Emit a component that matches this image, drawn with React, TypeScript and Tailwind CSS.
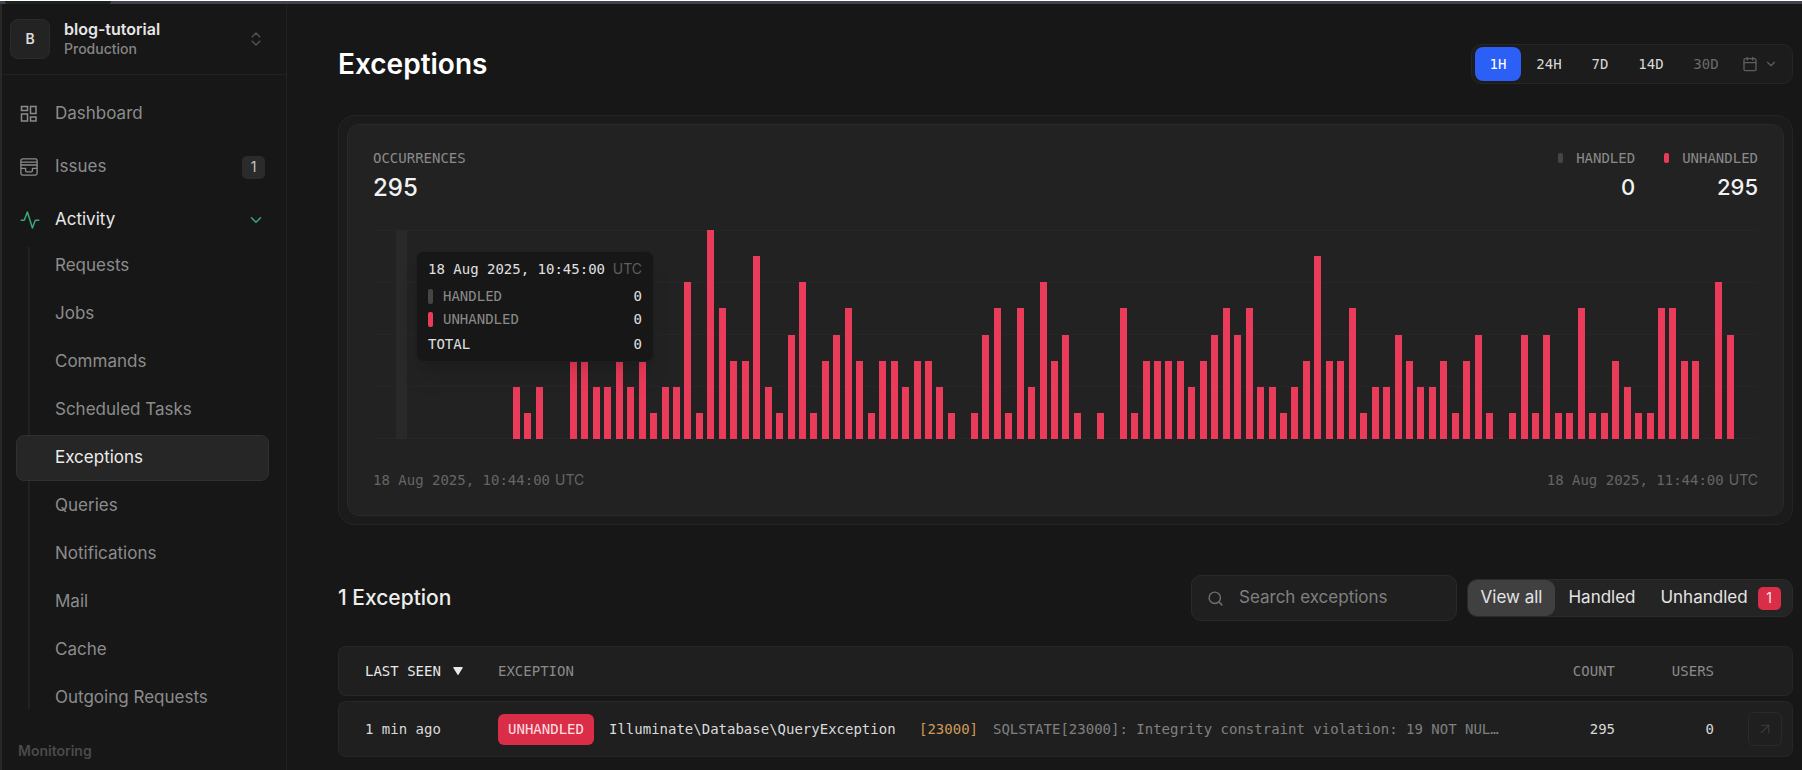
import { useState } from "react";
import {
  ArrowUpRight,
  Calendar,
  ChevronDown,
  ChevronsUpDown,
  Search,
} from "lucide-react";
import clsx from "clsx";

const activityLinks = [
  "Requests",
  "Jobs",
  "Commands",
  "Scheduled Tasks",
  "Exceptions",
  "Queries",
  "Notifications",
  "Mail",
  "Cache",
  "Outgoing Requests",
];

const ranges = [
  { label: "1H", width: "w-[46px]" },
  { label: "24H", width: "w-[54px]" },
  { label: "7D", width: "w-[46px]" },
  { label: "14D", width: "w-[54px]" },
  { label: "30D", width: "w-[54px]", disabled: true },
];

// one value per 30 second bucket
const buckets = [
  0, 0, 0, 0, 0, 0, 0, 0, 0, 0, 0, 0, 2, 1, 2, 0, 0, 3, 3, 2, 2, 3, 2, 3, 1, 2,
  2, 6, 1, 8, 5, 3, 3, 7, 2, 1, 4, 6, 1, 3, 4, 5, 3, 1, 3, 3, 2, 3, 3, 2, 1, 0,
  1, 4, 5, 1, 5, 2, 6, 3, 4, 1, 0, 1, 0, 5, 1, 3, 3, 3, 3, 2, 3, 4, 5, 4, 5, 2,
  2, 1, 2, 3, 7, 3, 3, 5, 1, 2, 2, 4, 3, 2, 2, 3, 1, 3, 4, 1, 0, 1, 4, 1, 4, 1,
  1, 5, 1, 1, 3, 2, 1, 1, 5, 5, 3, 3, 0, 6, 4, 0, 0,
];
const maxCount = 8;
const hoveredBucket = 2;

const mono = "font-['DejaVu_Sans_Mono',monospace]";

const DashboardIcon = () => (
  <svg
    width="18"
    height="18"
    viewBox="0 0 18 18"
    fill="none"
    stroke="currentColor"
    strokeWidth="1.5"
  >
    <rect x="1.5" y="1.5" width="6" height="4" />
    <rect x="10.5" y="1.5" width="5.5" height="7" />
    <rect x="1.5" y="9" width="6" height="7" />
    <rect x="10.5" y="12" width="5.5" height="4" />
  </svg>
);

const IssuesIcon = () => (
  <svg
    width="18"
    height="18"
    viewBox="0 0 18 18"
    fill="none"
    stroke="currentColor"
    strokeWidth="1.3"
    strokeLinejoin="round"
  >
    <rect x="0.9" y="0.9" width="16.2" height="16.2" rx="1.8" />
    <path d="M1 4.2h16M1 7h16M1 10.4h4.6v2.4a1 1 0 0 0 1 1h4.8a1 1 0 0 0 1-1v-2.4H17" />
  </svg>
);

const ActivityIcon = () => (
  <svg
    width="20"
    height="18"
    viewBox="0 0 20 18"
    fill="none"
    stroke="currentColor"
    strokeWidth="1.5"
    strokeLinecap="round"
    strokeLinejoin="round"
  >
    <path d="M1.2 9.3h3L7.4 1l5 16 2.9-7.7h3.5" />
  </svg>
);

const Sidebar = () => {
  return (
    <aside className="w-[285px] shrink-0 border-r border-[#212121] flex flex-col">
      <button
        type="button"
        className="h-[71px] pl-2 pr-[21px] flex items-center text-left border-b border-[#222222]"
      >
        <span className="size-10 rounded-lg border border-[#2b2b2b] bg-[#232323] flex items-center justify-center text-sm font-semibold text-[#dcdcdc]">
          B
        </span>
        <span className="ml-3.5 flex-1 flex flex-col">
          <span className="text-base leading-5 font-semibold text-[#e6e6e6]">
            blog-tutorial
          </span>
          <span className="text-sm leading-5 font-medium text-[#858585]">
            Production
          </span>
        </span>
        <ChevronsUpDown className="size-[18px] text-[#505050]" strokeWidth={2} />
      </button>

      <nav className="pl-[18px] pr-[21px] pt-4 text-[17px] text-[#8c8c8c]">
        <a href="#dashboard" className="h-[46px] flex items-center">
          <span className="w-[35px]">
            <DashboardIcon />
          </span>
          Dashboard
        </a>
        <a href="#issues" className="mt-[7px] h-[46px] flex items-center">
          <span className="w-[35px]">
            <IssuesIcon />
          </span>
          Issues
          <span className="ml-auto size-[23px] rounded-[5px] bg-[#2b2b2b] flex items-center justify-center text-sm text-[#c4c4c4]">
            1
          </span>
        </a>
        <a
          href="#activity"
          className="mt-[7px] h-[46px] flex items-center text-[#e8e8e8]"
        >
          <span className="w-[35px] text-[#3aa873]">
            <ActivityIcon />
          </span>
          Activity
          <ChevronDown className="ml-auto size-[18px] text-[#3aa873]" />
        </a>
        <ul className="relative flex flex-col gap-0.5">
          <span className="absolute left-2 top-1 bottom-3 w-0.5 bg-[#222222]" />
          {activityLinks.map((link) => (
            <li key={link} className="relative -ml-1 -mr-1">
              <a
                href={"#" + link.toLowerCase().replace(" ", "-")}
                className={clsx(
                  "h-[46px] flex items-center",
                  link === "Exceptions"
                    ? "pl-[38px] rounded-lg border border-[#303030] bg-[#262626] text-[#ececec]"
                    : "pl-[39px]",
                )}
              >
                {link}
              </a>
            </li>
          ))}
        </ul>
      </nav>
      <h2 className="mt-[18px] ml-4 text-sm leading-6 font-semibold text-[#4a4a4a]">
        Monitoring
      </h2>
    </aside>
  );
};

type StatProps = {
  label: string;
  value: number;
  markerClass: string;
};

const Stat = ({ label, value, markerClass }: StatProps) => (
  <div className="flex flex-col items-end">
    <div className="flex items-center gap-[13px] leading-5">
      <span className={clsx("w-[5px] h-2.5 rounded-xs", markerClass)} />
      <span className={clsx(mono, "text-sm leading-5 text-[#8a8a8a]")}>
        {label}
      </span>
    </div>
    <span className="mt-[3px] text-[22px] leading-8 font-medium text-[#f2f2f2]">
      {value}
    </span>
  </div>
);

const Tooltip = () => (
  <div
    className={clsx(
      mono,
      "absolute left-[43px] top-[21px] w-[238px] h-[111px] rounded-lg border border-[#1f1f1f] bg-[#171717] shadow-xl px-[11px] pt-[7px] text-sm leading-5",
    )}
  >
    <div className="flex justify-between text-[#e0e0e0]">
      <span>18 Aug 2025, 10:45:00</span>
      <span className="text-[#5e5e5e] font-['Inter',sans-serif]">UTC</span>
    </div>
    <div className="mt-[7px] flex items-center text-[#8a8a8a]">
      <span className="w-[5px] h-[15px] mr-2.5 rounded-xs bg-[#454545]" />
      HANDLED
      <span className="ml-auto text-[#e0e0e0]">0</span>
    </div>
    <div className="mt-[3px] flex items-center text-[#8a8a8a]">
      <span className="w-[5px] h-[15px] mr-2.5 rounded-xs bg-[#eb3b5a]" />
      UNHANDLED
      <span className="ml-auto text-[#e0e0e0]">0</span>
    </div>
    <div className="mt-[5px] flex justify-between text-[#e0e0e0]">
      <span>TOTAL</span>
      <span>0</span>
    </div>
  </div>
);

const Chart = () => (
  <div className="relative mt-[26px] h-[209px]">
    <div className="absolute inset-0 flex flex-col justify-between">
      {[0, 1, 2, 3, 4].map((line) => (
        <div key={line} className="h-px bg-[#262626]" />
      ))}
    </div>
    <div className="relative h-full flex items-end">
      {buckets.map((count, i) => (
        <div key={i} className="flex-1 h-full flex items-end justify-center">
          {i === hoveredBucket ? (
            <div className="w-full h-full bg-[#292929]" />
          ) : (
            <div
              className="w-[7px] bg-[#eb3b5a]"
              style={{ height: (count / maxCount) * 100 + "%" }}
            />
          )}
        </div>
      ))}
    </div>
    <Tooltip />
  </div>
);

const Occurrences = () => (
  <section className="mt-[31px] rounded-2xl border border-[#242424] bg-[#1b1b1b] p-2">
    <div className="rounded-xl border border-[#292929] bg-[#222222] px-[25px] pt-[23px] pb-[25px]">
      <div className="flex justify-between">
        <div className="flex flex-col">
          <span className={clsx(mono, "text-sm leading-5 text-[#8a8a8a]")}>
            OCCURRENCES
          </span>
          <span className="mt-1 text-2xl leading-8 font-medium text-[#f2f2f2]">
            295
          </span>
        </div>
        <div className="flex gap-[29px]">
          <Stat label="HANDLED" value={0} markerClass="bg-[#454545]" />
          <Stat label="UNHANDLED" value={295} markerClass="bg-[#eb3b5a]" />
        </div>
      </div>
      <Chart />
      <div
        className={clsx(
          mono,
          "mt-[31px] flex justify-between text-sm leading-5 text-[#666666]",
        )}
      >
        <span className="flex gap-[5px]">
          18 Aug 2025, 10:44:00
          <span className="font-['Inter',sans-serif]">UTC</span>
        </span>
        <span className="flex gap-[5px]">
          18 Aug 2025, 11:44:00
          <span className="font-['Inter',sans-serif]">UTC</span>
        </span>
      </div>
    </div>
  </section>
);

const ExceptionsTable = () => (
  <table
    className={clsx(
      mono,
      "mt-5 w-full table-fixed border-separate border-spacing-x-0 border-spacing-y-[5px] text-sm text-left",
    )}
  >
    <thead>
      <tr className="h-[50px] text-[#8a8a8a] *:font-normal *:bg-[#1f1f1f] *:border-y *:border-[#272727] *:p-0">
        <th className="w-[160px] border-l rounded-l-lg">
          <button
            type="button"
            className="pl-[26px] flex items-center gap-3 text-[#e8e8e8]"
          >
            LAST SEEN
            <svg width="10" height="8" viewBox="0 0 10 8" fill="currentColor">
              <path d="M1 0h8a.7.7 0 0 1 .6 1.1L5.6 7.4a.7.7 0 0 1-1.2 0L.4 1.1A.7.7 0 0 1 1 0z" />
            </svg>
          </button>
        </th>
        <th>EXCEPTION</th>
        <th className="w-[112px] text-right">COUNT</th>
        <th className="w-[99px] text-right">USERS</th>
        <th className="w-[79px] border-r rounded-r-lg" aria-label="Open" />
      </tr>
    </thead>
    <tbody>
      <tr className="h-14 text-[#dadada] *:bg-[#1f1f1f] *:border-y *:border-[#272727] *:p-0">
        <td className="border-l rounded-l-lg">
          <span className="pl-[26px]">1 min ago</span>
        </td>
        <td>
          <div className="flex items-center whitespace-nowrap">
            <span className="w-24 h-[31px] shrink-0 rounded-md bg-[#d92d48] flex items-center justify-center text-[#ffe0e4]">
              UNHANDLED
            </span>
            <span className="ml-[15px] w-[294px] shrink-0">
              Illuminate\Database\QueryException
            </span>
            <span className="ml-4 w-[59px] shrink-0 text-[#cf9a57]">
              [23000]
            </span>
            <span className="ml-[15px] min-w-0 flex-1 truncate text-[#808080]">
              SQLSTATE[23000]: Integrity constraint violation: 19 NOT NUL…
            </span>
          </div>
        </td>
        <td className="text-right">295</td>
        <td className="text-right">0</td>
        <td className="border-r rounded-r-lg">
          <a
            href="#exception"
            aria-label="View exception"
            className="ml-auto mr-2.5 size-[34px] rounded-md border border-[#2a2a2a] flex items-center justify-center text-[#3c3c3c]"
          >
            <ArrowUpRight className="size-[18px]" strokeWidth={1.5} />
          </a>
        </td>
      </tr>
    </tbody>
  </table>
);

export default function App() {
  const [range, setRange] = useState("1H");
  const [filter, setFilter] = useState("View all");

  return (
    <div className="min-h-screen flex flex-col bg-[#171717] font-['Inter',sans-serif]">
      <div className="h-1 border-t border-white bg-[#44424f]">
        <div className="ml-[5px] h-[3px] w-[106px] rounded-b-sm bg-[#1c2420]" />
      </div>
      <div className="flex-1 flex border-l-2 border-[#292827]">
        <Sidebar />
        <main className="flex-1 min-w-0 pl-[51px] pr-[9px] pt-10">
          <header className="h-10 flex items-center justify-between">
            <h1 className="text-[28px] leading-10 font-semibold text-white">
              Exceptions
            </h1>
            <div className="h-10 rounded-[10px] border border-[#262626] bg-[#1c1c1c] pl-[3px] pr-3.5 flex items-center gap-px">
              {ranges.map(({ label, width, disabled }) => (
                <button
                  key={label}
                  type="button"
                  disabled={disabled}
                  onClick={() => setRange(label)}
                  className={clsx(
                    mono,
                    width,
                    "h-[34px] rounded-lg text-sm",
                    range === label
                      ? "bg-[#2c5ff6] text-white"
                      : "text-[#d8d8d8] disabled:text-[#6a6a6a]",
                  )}
                >
                  {label}
                </button>
              ))}
              <button
                type="button"
                aria-label="Custom range"
                className="ml-2 flex items-center gap-1.5 text-[#5e5e5e]"
              >
                <Calendar className="size-4" />
                <ChevronDown className="size-3.5" />
              </button>
            </div>
          </header>

          <Occurrences />

          <div className="mt-[50px] flex items-center">
            <h2 className="mr-auto text-[21px] leading-8 font-medium text-[#ededed]">
              1 Exception
            </h2>
            <label className="w-[266px] h-[46px] mr-2.5 pl-[15px] flex items-center gap-[15px] rounded-[10px] border border-[#2a2a2a] bg-[#1f1f1f] text-[#707070]">
              <Search className="size-[17px] shrink-0" />
              <input
                type="text"
                aria-label="Search exceptions"
                placeholder="Search exceptions"
                className="min-w-0 flex-1 bg-transparent text-[17px] text-[#e0e0e0] placeholder:text-[#808080] outline-none"
              />
            </label>
            <div className="h-[38px] rounded-[10px] border border-[#2b2b2b] bg-[#242424] flex items-center text-[17px] text-[#e4e4e4]">
              {["View all", "Handled", "Unhandled"].map((name) => (
                <button
                  key={name}
                  type="button"
                  onClick={() => setFilter(name)}
                  className={clsx(
                    "h-9 rounded-[9px] flex items-center justify-center",
                    name === "View all" && "w-[87px]",
                    name === "Handled" && "w-[94px]",
                    name === "Unhandled" && "w-[143px] gap-2.5",
                    filter === name && "bg-[#404040]",
                  )}
                >
                  {name}
                  {name === "Unhandled" && (
                    <span className="size-[23px] rounded-[5px] bg-[#d92d48] flex items-center justify-center text-sm text-[#ffe0e4]">
                      1
                    </span>
                  )}
                </button>
              ))}
            </div>
          </div>

          <ExceptionsTable />
        </main>
      </div>
    </div>
  );
}
